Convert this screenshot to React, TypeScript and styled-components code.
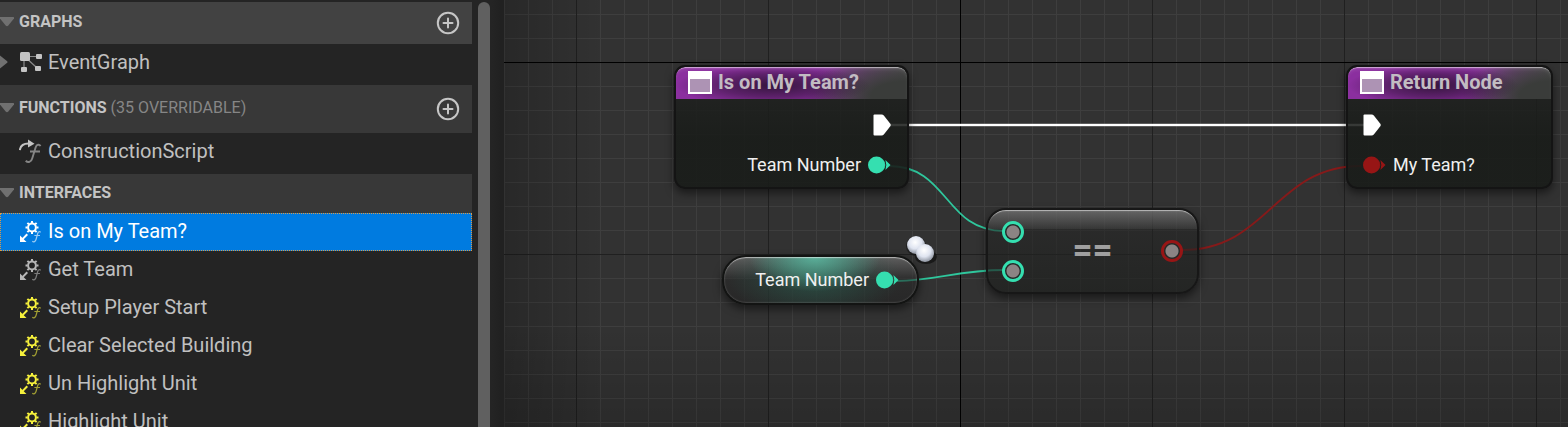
import React from "react";
import styled, { createGlobalStyle, css } from "styled-components";

const GlobalStyle = createGlobalStyle`
  * { box-sizing: border-box; }
  html, body { margin: 0; height: 100%; background: #242424; overflow: hidden; }
  body { font-family: Roboto, "Liberation Sans", sans-serif; color: #c0c0c0; }
  #root { height: 100%; }
  button { font: inherit; color: inherit; background: none; border: 0; padding: 0; margin: 0; cursor: pointer; }
`;

const Editor = styled.div`
  display: flex;
  height: 100vh;
  overflow: hidden;
`;

/* ---------- side panel ---------- */

const Sidebar = styled.aside`
  flex: 0 0 504px;
  display: flex;
  align-items: stretch;
  padding-top: 2px;
  background: linear-gradient(to right, #242424 492px, #212121 500px);
`;

const Outline = styled.nav`
  flex: 1;
  min-width: 0;
`;

const ScrollTrack = styled.div`
  flex: 0 0 32px;
  padding-left: 6px;
`;

const ScrollThumb = styled.div`
  width: 12px;
  height: 100%;
  background: #606060;
  border-radius: 6px 6px 0 0;
`;

const SectionHeader = styled.div<{ $height: number; $hovered?: boolean }>`
  display: flex;
  align-items: center;
  justify-content: space-between;
  height: ${(p) => p.$height}px;
  padding-right: 12px;
  background: ${(p) => (p.$hovered ? "#424242" : "#383838")};
`;

const SectionToggle = styled.button`
  display: flex;
  align-items: center;
  gap: 5px;
  padding-bottom: 2px;
  font-size: 16px;
  line-height: 20px;
  font-weight: 700;
  color: #c4c4c4;
`;

const Note = styled.span`
  font-weight: 400;
  color: #868686;
`;

const AddButton = styled.button`
  display: flex;
`;

const List = styled.ul`
  list-style: none;
  margin: 0;
  padding: 0;
`;

const Row = styled.button<{ $tall?: boolean; $selected?: boolean; $expandable?: boolean }>`
  display: flex;
  align-items: center;
  width: 100%;
  height: ${(p) => (p.$tall ? 41 : 38)}px;
  padding: 0 0 ${(p) => (p.$tall ? 6 : 2)}px ${(p) => (p.$expandable ? 0 : 19)}px;
  font-size: 20px;
  line-height: 26px;
  text-align: left;
  ${(p) =>
    p.$selected &&
    css`
      background: #007be0;
      color: #ffffff;
      outline: 1px dotted #d99a4a;
      outline-offset: -1px;
    `}
`;

const RowIcon = styled.span<{ $color: string }>`
  display: flex;
  flex: 0 0 29px;
  color: ${(p) => p.$color};
`;

const Expander = styled.span`
  display: flex;
  flex: 0 0 19px;
`;

/* ---------- graph canvas ---------- */

const Canvas = styled.main`
  position: relative;
  flex: 1;
  min-width: 0;
  overflow: hidden;
  background-color: #323232;
  background-image:
    linear-gradient(#000000 1px, transparent 1px),
    linear-gradient(to right, #000000 1px, transparent 1px),
    linear-gradient(#202020 1px, transparent 1px),
    linear-gradient(to right, #202020 1px, transparent 1px),
    linear-gradient(#3e3e3e 1px, transparent 1px),
    linear-gradient(to right, #3e3e3e 1px, transparent 1px);
  background-size: 100% 4000px, 4000px 100%, 100% 192px, 192px 100%, 100% 24px, 24px 100%;
  background-position: 0 62px, 456px 0, 0 62px, 72px 0, 0 14px, 0 0;
`;

const Vignette = styled.div`
  position: absolute;
  inset: 0;
  background:
    linear-gradient(to right, rgba(0, 0, 0, 0.2), transparent 100px),
    linear-gradient(to top, rgba(0, 0, 0, 0.16), transparent 100px);
`;

const Wires = styled.svg`
  position: absolute;
  left: 0;
  top: 0;
  overflow: visible;
`;

const nodeAt = css<{ $x: number; $y: number; $w: number }>`
  position: absolute;
  left: ${(p) => p.$x}px;
  top: ${(p) => p.$y}px;
  width: ${(p) => p.$w}px;
`;

const Node = styled.section<{ $x: number; $y: number; $w: number }>`
  ${nodeAt}
  height: 124px;
  border: 2px solid #141414;
  border-radius: 11px;
  background: linear-gradient(rgba(32, 33, 32, 0.76), rgba(25, 28, 25, 0.9) 60%);
  box-shadow: 0 4px 9px rgba(0, 0, 0, 0.5);
  overflow: hidden;
`;

const NodeHeader = styled.header`
  display: flex;
  align-items: center;
  gap: 6px;
  height: 32px;
  padding: 0 0 2px 12px;
  border-radius: 9px 9px 0 0;
  background:
    radial-gradient(ellipse 42% 64% at 42% 58%, rgba(24, 12, 28, 0.75), rgba(24, 12, 28, 0.4) 55%, transparent),
    radial-gradient(ellipse 44% 130% at 100% 90%, #3a3c3a 35%, transparent),
    linear-gradient(to right, #8b2f9f 60%, #555555);
  box-shadow: inset 0 2px 1px -1px rgba(255, 255, 255, 0.55), inset 0 4px 4px -2px rgba(255, 255, 255, 0.15);
`;

const NodeTitle = styled.h2`
  margin: 0;
  font-size: 20px;
  line-height: 24px;
  font-weight: 700;
  color: #c2bcc2;
`;

const PinRow = styled.div<{ $out?: boolean; $exec?: boolean }>`
  display: flex;
  align-items: center;
  justify-content: ${(p) => (p.$out ? "flex-end" : "flex-start")};
  gap: 7px;
  height: ${(p) => (p.$exec ? 52 : 28)}px;
  padding: 0 16px 0 ${(p) => (p.$out ? 0 : 15)}px;
  font-size: 18px;
  line-height: 24px;
  color: #f0f0f0;
`;

const VariableNode = styled.section<{ $x: number; $y: number; $w: number }>`
  ${nodeAt}
  display: flex;
  align-items: center;
  justify-content: flex-end;
  gap: 7px;
  height: 50px;
  padding-right: 18px;
  border: 2px solid #131413;
  border-radius: 24px;
  font-size: 18px;
  line-height: 24px;
  color: #f0f0f0;
  background:
    radial-gradient(ellipse 34% 75% at 47% 0, rgba(92, 190, 165, 0.85), transparent),
    radial-gradient(ellipse 45% 90% at 47% 45%, rgba(42, 92, 78, 0.7), transparent),
    linear-gradient(rgba(105, 105, 105, 0.8), rgba(38, 38, 38, 0.55) 50%, rgba(36, 36, 36, 0.75));
  box-shadow: 0 4px 8px rgba(0, 0, 0, 0.5), inset 0 2px 1px -1px rgba(255, 255, 255, 0.5),
    inset 0 0 2px rgba(255, 255, 255, 0.35);
`;

const OperatorNode = styled.section<{ $x: number; $y: number; $w: number }>`
  ${nodeAt}
  display: flex;
  align-items: center;
  justify-content: space-between;
  height: 86px;
  padding: 0 14px;
  border: 2px solid #171717;
  border-radius: 20px;
  background:
    linear-gradient(rgba(160, 160, 160, 0.5), rgba(110, 110, 110, 0.18) 19px, transparent 19px),
    linear-gradient(rgba(38, 38, 38, 0.55), rgba(30, 32, 30, 0.7));
  box-shadow: 0 4px 9px rgba(0, 0, 0, 0.5), inset 0 2px 1px -1px rgba(255, 255, 255, 0.55);
`;

const OperatorInputs = styled.div`
  display: flex;
  flex-direction: column;
  gap: 17px;
`;

const Symbol = styled.span`
  font-size: 35px;
  line-height: 40px;
  font-weight: 700;
  color: #a0a0a0;
`;

const RingPin = styled.span<{ $color: string }>`
  display: block;
  width: 22px;
  height: 22px;
  border: 3px solid ${(p) => p.$color};
  border-radius: 50%;
  background: radial-gradient(circle, #8b8484 6px, #252b29 7px);
`;

const PureMark = styled.svg`
  position: absolute;
  left: 400px;
  top: 234px;
`;

/* ---------- drawings ---------- */

const TEAL = "#35dfb0";
const RED = "#971515";

const DownArrow = () => (
  <svg width="14" height="10" viewBox="0 0 14 10" aria-hidden="true">
    <path d="M0 0H13Q15 0 14 1.5L8.3 8.6Q7 10 5.7 8.6L0 1.5Z" fill="#707070" />
  </svg>
);

const RightArrow = () => (
  <svg width="8" height="14" viewBox="0 0 8 14" aria-hidden="true">
    <path d="M0 0.500L7.200 6.200Q8 7 7.200 7.800L0 13.500Z" fill="#707070" />
  </svg>
);

const PlusCircle = () => (
  <svg width="24" height="24" viewBox="0 0 24 24" fill="none" stroke="#c6c6c6" strokeWidth="2" aria-hidden="true">
    <circle cx="12" cy="12" r="10.200" />
    <path d="M12 7.500V16.500M7.500 12H16.500" strokeLinecap="round" />
  </svg>
);

const GraphIcon = () => (
  <svg width="23" height="22" viewBox="0 0 23 22" fill="currentColor" aria-hidden="true">
    <path d="M5 5V16M5 5.500H18M5 5L17 16" stroke="#8a8a8a" strokeWidth="1.200" fill="none" />
    <rect x="1" y="1" width="10" height="9" rx="1.500" />
    <rect x="17" y="3" width="6" height="5" rx="1" />
    <rect x="2" y="16" width="6" height="5" rx="1" />
    <rect x="16" y="15" width="6" height="5" rx="1" />
  </svg>
);

const ScriptIcon = () => (
  <svg width="23" height="24" viewBox="0 0 23 24" fill="none" aria-hidden="true">
    <path d="M0.800 11C1.500 6.500 4.500 4.500 9.500 4.500" stroke="currentColor" strokeWidth="2" />
    <path d="M9 0.500L15.500 4.800L9 8.500Z" fill="currentColor" />
    <path
      d="M21.500 7.200C20.500 5 17.600 5 16.600 8.500L13.200 19.500C12.200 23.200 9 24 6.700 21.800M11 12.500H21"
      stroke="#858585"
      strokeWidth="1.900"
    />
  </svg>
);

const InterfaceIcon = () => (
  <svg width="22" height="23" viewBox="0 0 22 23" fill="none" stroke="currentColor" aria-hidden="true">
    <circle cx="13" cy="7.500" r="3.900" strokeWidth="2" />
    <path
      d="M13 1V3M13 12V14M6.500 7.500H8.500M17.500 7.500H19.500M8.400 2.900L9.900 4.400M16.100 10.600L17.600 12.100M17.600 2.900L16.100 4.400M9.900 10.600L8.400 12.100"
      strokeWidth="2"
    />
    <path d="M8.300 14.300L3.500 19.100" strokeWidth="2" />
    <path d="M1 15.500V22H7.500Z" fill="currentColor" stroke="none" />
    <path
      d="M21.700 12.300C20.500 11 19.200 11.600 18.700 13.500L17 19.500C16.500 21.700 14.600 22.400 13.300 21.200M15.400 15.500H21"
      strokeWidth="1.200"
      opacity="0.6"
    />
  </svg>
);

const WindowIcon = () => (
  <svg width="24" height="23" viewBox="0 0 24 23" aria-hidden="true">
    <rect x="1" y="1" width="22" height="21" fill="#ad93b4" stroke="#ffffff" strokeWidth="2" />
    <rect x="1" y="1" width="22" height="7" fill="#ffffff" />
  </svg>
);

const ExecPin = () => (
  <svg width="18" height="22" viewBox="0 0 18 22" aria-hidden="true">
    <path
      d="M0.500 1.500Q0.500 0.500 1.500 0.500H8.500Q10 0.500 11 1.700L17.500 10Q18 11 17.500 12L11 20.300Q10 21.500 8.500 21.500H1.500Q0.500 21.500 0.500 20.500Z"
      fill="#ffffff"
    />
  </svg>
);

const DataPin = ({ color }: { color: string }) => (
  <svg width="23" height="18" viewBox="0 0 23 18" fill={color} aria-hidden="true">
    <circle cx="8.500" cy="9" r="8.500" />
    <path d="M17.400 4L22.500 9L17.400 14Q19.200 9 17.400 4Z" />
    <path d="M15 3.500Q20 9 15 14.500Z" opacity="0.600" />
  </svg>
);

/* ---------- content ---------- */

const interfaceRows = [
  { name: "Is on My Team?", color: "#ffffff", selected: true },
  { name: "Get Team", color: "#b8b8b8" },
  { name: "Setup Player Start", color: "#f5f03c" },
  { name: "Clear Selected Building", color: "#f5f03c" },
  { name: "Un Highlight Unit", color: "#f5f03c" },
  { name: "Highlight Unit", color: "#f5f03c" },
];

type SectionProps = { title: string; note?: string; height: number; hovered?: boolean; addable?: boolean };

const Section = ({ title, note, height, hovered, addable }: SectionProps) => (
  <SectionHeader $height={height} $hovered={hovered}>
    <SectionToggle aria-expanded="true">
      <DownArrow />
      <span>
        {title} {note && <Note>{note}</Note>}
      </span>
    </SectionToggle>
    {addable && (
      <AddButton aria-label="Add">
        <PlusCircle />
      </AddButton>
    )}
  </SectionHeader>
);

export default function App() {
  return (
    <>
      <GlobalStyle />
      <Editor>
        <Sidebar>
          <Outline>
            <Section title="GRAPHS" height={42} hovered addable />
            <Row $tall $expandable>
              <Expander>
                <RightArrow />
              </Expander>
              <RowIcon $color="#c4c4c4">
                <GraphIcon />
              </RowIcon>
              EventGraph
            </Row>
            <Section title="FUNCTIONS" note="(35 OVERRIDABLE)" height={48} addable />
            <Row $tall>
              <RowIcon $color="#c4c4c4">
                <ScriptIcon />
              </RowIcon>
              ConstructionScript
            </Row>
            <Section title="INTERFACES" height={39} />
            <List>
              {interfaceRows.map((row) => (
                <li key={row.name}>
                  <Row $selected={row.selected}>
                    <RowIcon $color={row.color}>
                      <InterfaceIcon />
                    </RowIcon>
                    {row.name}
                  </Row>
                </li>
              ))}
            </List>
          </Outline>
          <ScrollTrack>
            <ScrollThumb />
          </ScrollTrack>
        </Sidebar>

        <Canvas>
          <Vignette />
          <Wires width="1064" height="427" fill="none" aria-hidden="true">
            <path d="M386 125H860" stroke="#ffffff" strokeOpacity="0.4" strokeWidth="3" />
            <path d="M386 125H860" stroke="#ffffff" strokeWidth="2" />
            <path d="M385 166C445 166 440 231 500 231" stroke="#2fc79d" strokeWidth="1.800" />
            <path d="M393 281C430 281 455 270 500 270" stroke="#2fc79d" strokeWidth="1.800" />
            <path d="M678 250C765 250 770 166 857 166" stroke="#861a1a" strokeWidth="1.800" />
          </Wires>

          <Node $x={170} $y={65} $w={235}>
            <NodeHeader>
              <WindowIcon />
              <NodeTitle>Is on My Team?</NodeTitle>
            </NodeHeader>
            <PinRow $out $exec>
              <ExecPin />
            </PinRow>
            <PinRow $out>
              Team Number
              <DataPin color={TEAL} />
            </PinRow>
          </Node>

          <Node $x={842} $y={65} $w={207}>
            <NodeHeader>
              <WindowIcon />
              <NodeTitle>Return Node</NodeTitle>
            </NodeHeader>
            <PinRow $exec>
              <ExecPin />
            </PinRow>
            <PinRow>
              <DataPin color={RED} />
              My Team?
            </PinRow>
          </Node>

          <VariableNode $x={218} $y={255} $w={197}>
            Team Number
            <DataPin color={TEAL} />
          </VariableNode>

          <OperatorNode $x={482} $y={208} $w={213}>
            <OperatorInputs>
              <RingPin $color={TEAL} />
              <RingPin $color={TEAL} />
            </OperatorInputs>
            <Symbol>==</Symbol>
            <RingPin $color={RED} />
          </OperatorNode>

          <PureMark width="34" height="32" viewBox="0 0 34 32" aria-hidden="true">
            <defs>
              <radialGradient id="ball" cx="0.45" cy="0.35" r="0.6">
                <stop offset="0" stopColor="#ffffff" />
                <stop offset="0.6" stopColor="#dfe4f0" />
                <stop offset="1" stopColor="#9ba1ad" />
              </radialGradient>
            </defs>
            <ellipse cx="22" cy="23" rx="11" ry="7" fill="#111111" opacity="0.75" />
            <circle cx="12" cy="12" r="10" fill="#151515" opacity="0.6" />
            <circle cx="12" cy="11" r="9" fill="url(#ball)" />
            <circle cx="21" cy="19" r="9" fill="url(#ball)" />
          </PureMark>
        </Canvas>
      </Editor>
    </>
  );
}
